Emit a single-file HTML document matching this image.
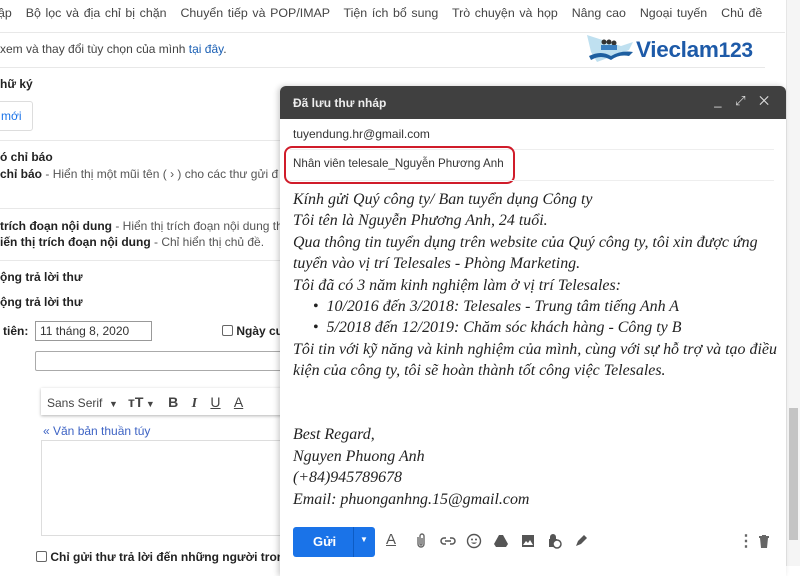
<!DOCTYPE html>
<html><head><meta charset="utf-8"><style>
*{margin:0;padding:0;box-sizing:border-box}
body{width:800px;height:566px;overflow:hidden;background:#fff;font-family:"Liberation Sans",Arial,sans-serif;color:#222;position:relative;font-size:12px}
.a{position:absolute;white-space:nowrap}
.hl{position:absolute;left:0;height:1px;background:#e8e8e8}
.b{font-weight:bold}
.g{color:#555}
.ser{font-family:"Liberation Serif",serif;font-style:italic;font-size:15.95px;color:#222}
.ic{position:absolute;top:533px;width:16px;height:16px}
</style></head><body>
<div class="a" style="left:-2px;top:6px;font-size:12.4px;color:#444;word-spacing:1.2px">ập &nbsp; Bộ lọc và địa chỉ bị chặn &nbsp; Chuyển tiếp và POP/IMAP &nbsp; Tiện ích bổ sung &nbsp; Trò chuyện và họp &nbsp; Nâng cao &nbsp; Ngoại tuyến &nbsp; Chủ đề</div>
<div class="hl" style="top:32px;width:785px"></div>
<div class="a" style="left:0;top:42px;color:#444">xem và thay đổi tùy chọn của mình <span style="color:#1a5fb4">tại đây</span>.</div>
<div class="hl" style="top:67px;width:765px"></div>
<svg class="a" style="left:585px;top:32px" width="50" height="32" viewBox="0 0 50 32"><path d="M2 3 L36 14 L48 10 L44 18 L12 30 L6 20 Z" fill="#bfe0f0"/><path d="M4 24 Q16 18 26 24 Q36 18 48 20 L44 24 Q34 22 26 28 Q16 22 6 28Z" fill="#1e5fa0"/><circle cx="19" cy="10" r="2.5" fill="#333"/><circle cx="24" cy="10" r="2.5" fill="#333"/><circle cx="29" cy="11" r="2.5" fill="#333"/><rect x="16" y="13" width="16" height="5" fill="#3a7fc0"/></svg>
<div class="a" style="left:636px;top:37px;font-size:22.5px;font-weight:bold;color:#1d5aa8;letter-spacing:-0.3px">Vieclam<span style="font-size:21px">123</span></div>
<div class="a b" style="left:0;top:77px">hữ ký</div>
<div class="a" style="left:-4px;top:101px;width:37px;height:30px;border:1px solid #ddd;border-radius:3px;color:#1a73e8;padding:7px 0 0 4px">mới</div>
<div class="hl" style="top:140px;width:280px"></div>
<div class="a b" style="left:0;top:150px">ó chỉ báo</div>
<div class="a" style="left:0;top:167px"><b>chỉ báo</b> <span class="g">- Hiển thị một mũi tên ( › ) cho các thư gửi đ</span></div>
<div class="hl" style="top:208px;width:280px"></div>
<div class="a" style="left:0;top:219px"><b>trích đoạn nội dung</b> <span class="g">- Hiển thị trích đoạn nội dung th</span></div>
<div class="a" style="left:0;top:235px"><b>iến thị trích đoạn nội dung</b> <span class="g">- Chỉ hiển thị chủ đề.</span></div>
<div class="hl" style="top:260px;width:280px"></div>
<div class="a b" style="left:0;top:270px">ộng trả lời thư</div>
<div class="a b" style="left:0;top:295px">ộng trả lời thư</div>
<div class="a b" style="left:3px;top:324px">tiên:</div>
<div class="a" style="left:35px;top:321px;width:117px;height:20px;border:1px solid #999;padding:2px 4px;color:#333">11 tháng 8, 2020</div>
<div class="a b" style="left:222px;top:324px"><span style="display:inline-block;width:11px;height:11px;border:1px solid #666;border-radius:2px;vertical-align:-1px"></span> Ngày cu</div>
<div class="a" style="left:35px;top:351px;width:250px;height:20px;border:1px solid #aaa;border-radius:2px"></div>
<div class="a" style="left:41px;top:388px;width:245px;height:27px;box-shadow:0 1px 3px rgba(0,0,0,.3);background:#fff;color:#444;font-size:12px;padding:6px 6px">Sans Serif &nbsp;<span style="font-size:9px">▼</span> &nbsp; <b style="font-size:14px">ᴛT</b><span style="font-size:9px"> ▼</span> &nbsp;&nbsp; <b style="font-size:14px">B</b> &nbsp;&nbsp; <i style="font-size:14px;font-family:'Liberation Serif'"><b>I</b></i> &nbsp;&nbsp; <u style="font-size:14px">U</u> &nbsp;&nbsp; <u style="font-size:14px">A</u></div>
<div class="a" style="left:43px;top:424px;color:#3d63c4">« Văn bản thuần túy</div>
<div class="a" style="left:41px;top:440px;width:250px;height:96px;border:1px solid #ddd"></div>
<div class="a b" style="left:36px;top:550px"><span style="display:inline-block;width:11px;height:11px;border:1px solid #666;border-radius:2px;vertical-align:-1px"></span> Chỉ gửi thư trả lời đến những người trong Da</div>
<div class="a" style="left:786px;top:0;width:14px;height:566px;background:#f5f5f5;border-left:1px solid #e6e6e6"></div>
<div class="a" style="left:789px;top:408px;width:9px;height:132px;background:#c4c4c4"></div>
<div class="a" style="left:280px;top:86px;width:506px;height:490px;background:#fff;box-shadow:-2px 0 6px rgba(0,0,0,.2);border-radius:6px 6px 0 0"></div>
<div class="a" style="left:280px;top:86px;width:506px;height:33px;background:#404040;border-radius:6px 6px 0 0;color:#eee;font-weight:bold;font-size:12px;padding:10px 13px">Đã lưu thư nháp
<span style="position:absolute;right:12px;top:7px;font-weight:normal;font-size:13px;color:#ddd;letter-spacing:5px">_ ⤢ ✕</span></div>
<div class="a" style="left:293px;top:127px;color:#333">tuyendung.hr@gmail.com</div>
<div class="a" style="left:290px;top:149px;width:484px;height:1px;background:#eee"></div>
<div class="a" style="left:293px;top:157px;color:#333;font-size:11.6px">Nhân viên telesale_Nguyễn Phương Anh</div>
<div class="a" style="left:284px;top:146px;width:231px;height:38px;border:2px solid #d01c2a;border-radius:8px"></div>
<div class="a" style="left:290px;top:180px;width:484px;height:1px;background:#eee"></div>
<div class="a ser" style="left:293px;top:189px;line-height:21.4px">Kính gửi Quý công ty/ Ban tuyển dụng Công ty<br>Tôi tên là Nguyễn Phương Anh, 24 tuổi.<br>Qua thông tin tuyển dụng trên website của Quý công ty, tôi xin được ứng<br>tuyển vào vị trí Telesales - Phòng Marketing.<br>Tôi đã có 3 năm kinh nghiệm làm ở vị trí Telesales:<br>&nbsp;&nbsp;&nbsp;&nbsp;&nbsp;•&nbsp; 10/2016 đến 3/2018: Telesales - Trung tâm tiếng Anh A<br>&nbsp;&nbsp;&nbsp;&nbsp;&nbsp;•&nbsp; 5/2018 đến 12/2019: Chăm sóc khách hàng - Công ty B<br>Tôi tin với kỹ năng và kinh nghiệm của mình, cùng với sự hỗ trợ và tạo điều<br>kiện của công ty, tôi sẽ hoàn thành tốt công việc Telesales.<br><br><br>Best Regard,<br>Nguyen Phuong Anh<br>(+84)945789678<br>Email: phuonganhng.15@gmail.com</div>
<div class="a" style="left:293px;top:527px;width:82px;height:30px;background:#1a73e8;border-radius:3px;color:#fff;font-weight:bold;font-size:13px;padding:7px 0 0 20px">Gửi<span style="position:absolute;left:60px;top:0;width:1px;height:30px;background:#0d5cc4"></span><span style="position:absolute;left:67px;top:8px;font-size:8px">▼</span></div>
<div class="a" style="left:386px;top:531px;font-size:15px;color:#555;text-decoration:underline">A</div>
<svg class="ic" style="left:413px" viewBox="0 0 16 16"><path d="M5 4v7a3 3 0 006 0V3a2 2 0 00-4 0v8a1 1 0 002 0V5" fill="none" stroke="#666" stroke-width="1.4"/></svg>
<svg class="ic" style="left:440px" viewBox="0 0 16 16"><path d="M6 5H4a3 3 0 000 6h2M10 5h2a3 3 0 010 6h-2M5 8h6" fill="none" stroke="#555" stroke-width="1.5"/></svg>
<svg class="ic" style="left:466px" viewBox="0 0 16 16"><circle cx="8" cy="8" r="6.5" fill="none" stroke="#555" stroke-width="1.4"/><circle cx="6" cy="6.5" r="1" fill="#555"/><circle cx="10" cy="6.5" r="1" fill="#555"/><path d="M5 9.5q3 3 6 0" fill="#555"/></svg>
<svg class="ic" style="left:493px" viewBox="0 0 16 16"><path d="M6 2h4l5 9-2 3H3L1 11z" fill="#555"/></svg>
<svg class="ic" style="left:520px" viewBox="0 0 16 16"><rect x="2" y="2" width="12" height="12" fill="#555"/><path d="M3 12l3-4 2 2 2-3 3 5z" fill="#fff"/></svg>
<svg class="ic" style="left:546px" viewBox="0 0 16 16"><path d="M4 6V4a3 3 0 016 0v2h1v8H3V6z" fill="#555"/><circle cx="11" cy="11" r="4" fill="#fff" stroke="#555" stroke-width="1.5"/></svg>
<svg class="ic" style="left:573px" viewBox="0 0 16 16"><path d="M3 13l2-5 6-6 3 3-6 6z" fill="#555"/></svg>
<div class="a" style="left:738px;top:531px;font-size:16px;color:#666;font-weight:bold">⋮</div>
<svg class="ic" style="left:756px" viewBox="0 0 16 16"><path d="M3 3h10v2H3zM6 2h4v1H6zM4 5h8l-1 10H5z" fill="#666"/></svg>
</body></html>
